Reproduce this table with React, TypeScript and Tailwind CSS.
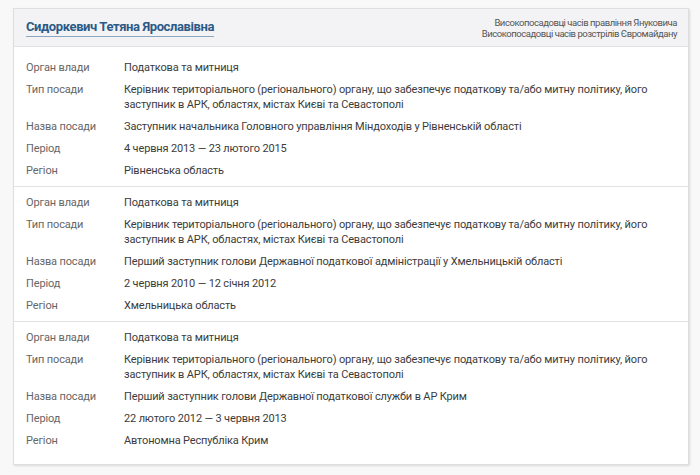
import React from "react";

type Row = { label: string; value: string };
const sections: Row[][] = [
  [
    { label: "Орган влади", value: "Податкова та митниця" },
    { label: "Тип посади", value: "Керівник територіального (регіонального) органу, що забезпечує податкову та/або митну політику, його заступник в АРК, областях, містах Києві та Севастополі" },
    { label: "Назва посади", value: "Заступник начальника Головного управління Міндоходів у Рівненській області" },
    { label: "Період", value: "4 червня 2013 — 23 лютого 2015" },
    { label: "Регіон", value: "Рівненська область" },
  ],
  [
    { label: "Орган влади", value: "Податкова та митниця" },
    { label: "Тип посади", value: "Керівник територіального (регіонального) органу, що забезпечує податкову та/або митну політику, його заступник в АРК, областях, містах Києві та Севастополі" },
    { label: "Назва посади", value: "Перший заступник голови Державної податкової адміністрації у Хмельницькій області" },
    { label: "Період", value: "2 червня 2010 — 12 січня 2012" },
    { label: "Регіон", value: "Хмельницька область" },
  ],
  [
    { label: "Орган влади", value: "Податкова та митниця" },
    { label: "Тип посади", value: "Керівник територіального (регіонального) органу, що забезпечує податкову та/або митну політику, його заступник в АРК, областях, містах Києві та Севастополі" },
    { label: "Назва посади", value: "Перший заступник голови Державної податкової служби в АР Крим" },
    { label: "Період", value: "22 лютого 2012 — 3 червня 2013" },
    { label: "Регіон", value: "Автономна Республіка Крим" },
  ],
];

export default function App() {
  return (
    <div className="w-[700px] h-[475px] bg-[#f8f8f8] pt-[8px] pl-[13px]" style={{ fontFamily: "Roboto, 'Noto Sans', sans-serif" }}>
      <div className="w-[676px] bg-white border border-[#dedede] shadow-[1px_1px_2px_rgba(0,0,0,0.12)]">
        <div className="h-[38px] bg-[#f3f3f6] border-b border-[#e2e2e6] flex items-center justify-between pl-[12px] pr-[11px]">
          <a className="text-[13px] font-bold tracking-[-0.4px] text-[#2b5a86] leading-[16px] border-b border-[#8aa6c0] pb-[1px]">Сидоркевич Тетяна Ярославівна</a>
          <div className="text-right text-[9.5px] tracking-[-0.45px] leading-[11px] text-[#555]">
            <div>Високопосадовці часів правління Януковича</div>
            <div>Високопосадовці часів розстрілів Євромайдану</div>
          </div>
        </div>
        {sections.map((rows, i) => (
          <div
            key={i}
            className={
              "flex flex-col gap-[7px] pl-[12px] pr-[12px] " +
              (i === 0 ? "pt-[13px] pb-[8px] border-b border-[#e2e2e2]" : i === 1 ? "pt-[8px] pb-[8px] border-b border-[#e2e2e2]" : "pt-[8px] pb-[16px]")
            }
          >
            {rows.map((r, j) => (
              <div key={j} className="flex text-[11px] tracking-[-0.15px] leading-[15px]">
                <div className="w-[98px] shrink-0 text-[#666]">{r.label}</div>
                <div className="flex-1 text-[#3c3c3c]">{r.value}</div>
              </div>
            ))}
          </div>
        ))}
      </div>
    </div>
  );
}
